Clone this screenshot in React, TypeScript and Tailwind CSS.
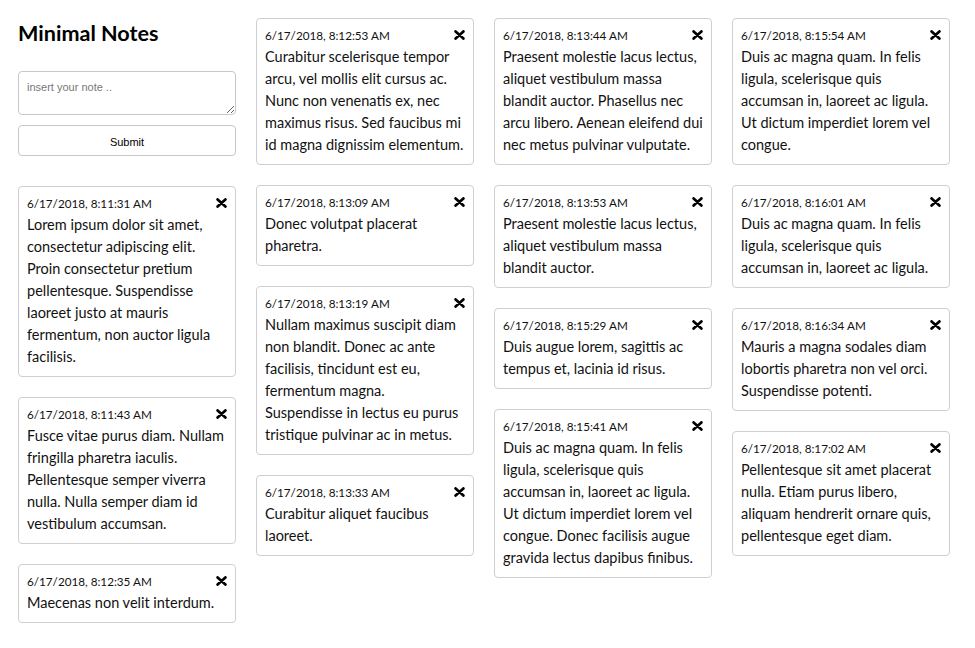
import React from "react";

type Note = { date: string; lines: string[] };

const columns: Note[][] = [
  [
    {
      date: "6/17/2018, 8:11:31 AM",
      lines: [
        "Lorem ipsum dolor sit amet,",
        "consectetur adipiscing elit.",
        "Proin consectetur pretium",
        "pellentesque. Suspendisse",
        "laoreet justo at mauris",
        "fermentum, non auctor ligula",
        "facilisis.",
      ],
    },
    {
      date: "6/17/2018, 8:11:43 AM",
      lines: [
        "Fusce vitae purus diam. Nullam",
        "fringilla pharetra iaculis.",
        "Pellentesque semper viverra",
        "nulla. Nulla semper diam id",
        "vestibulum accumsan.",
      ],
    },
    {
      date: "6/17/2018, 8:12:35 AM",
      lines: ["Maecenas non velit interdum."],
    },
  ],
  [
    {
      date: "6/17/2018, 8:12:53 AM",
      lines: [
        "Curabitur scelerisque tempor",
        "arcu, vel mollis elit cursus ac.",
        "Nunc non venenatis ex, nec",
        "maximus risus. Sed faucibus mi",
        "id magna dignissim elementum.",
      ],
    },
    {
      date: "6/17/2018, 8:13:09 AM",
      lines: ["Donec volutpat placerat", "pharetra."],
    },
    {
      date: "6/17/2018, 8:13:19 AM",
      lines: [
        "Nullam maximus suscipit diam",
        "non blandit. Donec ac ante",
        "facilisis, tincidunt est eu,",
        "fermentum magna.",
        "Suspendisse in lectus eu purus",
        "tristique pulvinar ac in metus.",
      ],
    },
    {
      date: "6/17/2018, 8:13:33 AM",
      lines: ["Curabitur aliquet faucibus", "laoreet."],
    },
  ],
  [
    {
      date: "6/17/2018, 8:13:44 AM",
      lines: [
        "Praesent molestie lacus lectus,",
        "aliquet vestibulum massa",
        "blandit auctor. Phasellus nec",
        "arcu libero. Aenean eleifend dui",
        "nec metus pulvinar vulputate.",
      ],
    },
    {
      date: "6/17/2018, 8:13:53 AM",
      lines: [
        "Praesent molestie lacus lectus,",
        "aliquet vestibulum massa",
        "blandit auctor.",
      ],
    },
    {
      date: "6/17/2018, 8:15:29 AM",
      lines: ["Duis augue lorem, sagittis ac", "tempus et, lacinia id risus."],
    },
    {
      date: "6/17/2018, 8:15:41 AM",
      lines: [
        "Duis ac magna quam. In felis",
        "ligula, scelerisque quis",
        "accumsan in, laoreet ac ligula.",
        "Ut dictum imperdiet lorem vel",
        "congue. Donec facilisis augue",
        "gravida lectus dapibus finibus.",
      ],
    },
  ],
  [
    {
      date: "6/17/2018, 8:15:54 AM",
      lines: [
        "Duis ac magna quam. In felis",
        "ligula, scelerisque quis",
        "accumsan in, laoreet ac ligula.",
        "Ut dictum imperdiet lorem vel",
        "congue.",
      ],
    },
    {
      date: "6/17/2018, 8:16:01 AM",
      lines: [
        "Duis ac magna quam. In felis",
        "ligula, scelerisque quis",
        "accumsan in, laoreet ac ligula.",
      ],
    },
    {
      date: "6/17/2018, 8:16:34 AM",
      lines: [
        "Mauris a magna sodales diam",
        "lobortis pharetra non vel orci.",
        "Suspendisse potenti.",
      ],
    },
    {
      date: "6/17/2018, 8:17:02 AM",
      lines: [
        "Pellentesque sit amet placerat",
        "nulla. Etiam purus libero,",
        "aliquam hendrerit ornare quis,",
        "pellentesque eget diam.",
      ],
    },
  ],
];

function CloseIcon() {
  return (
    <svg width="11" height="10" viewBox="0 0 11 10" className="mt-[4px] shrink-0">
      <path
        d="M1.6 1.4 L9.4 8.6 M9.4 1.4 L1.6 8.6"
        stroke="#000"
        strokeWidth="2.7"
        strokeLinecap="round"
        fill="none"
      />
    </svg>
  );
}

function NoteCard({ note }: { note: Note }) {
  return (
    <div className="border border-[#cfcfcf] rounded-[4px] px-2 pt-[7px] pb-2 bg-white">
      <div className="flex items-start justify-between h-[20px] text-[11.7px] leading-[18px] text-[#111]">
        <span>{note.date}</span>
        <CloseIcon />
      </div>
      <div className="text-[14.5px] leading-[22px] text-[#111]">
        {note.lines.map((l, i) => (
          <div key={i} className="whitespace-nowrap">
            {l}
          </div>
        ))}
      </div>
    </div>
  );
}

export default function App() {
  return (
    <div
      className="min-h-[648px] bg-white pt-[18px] pl-[18px] flex gap-5 items-start"
      style={{ fontFamily: "Lato, 'Noto Sans', sans-serif" }}
    >
      <div className="w-[218px] flex flex-col">
        <h1 className="text-[21.6px] leading-[30px] font-bold text-black">
          Minimal Notes
        </h1>
        <textarea
          placeholder="insert your note .."
          className="mt-[23px] h-[44px] w-full border border-[#c8c8c8] rounded-[4px] px-2 pt-[8px] text-[11px] leading-[14px] placeholder:text-[#777] outline-none resize-y"
          style={{ fontFamily: "'Liberation Sans', Arial, sans-serif" }}
        />
        <button
          className="mt-[10px] h-[31px] w-full border border-[#c8c8c8] rounded-[4px] bg-white text-[11px] leading-[14px] pt-[2px] text-black"
          style={{ fontFamily: "'Liberation Sans', Arial, sans-serif" }}
        >
          Submit
        </button>
        <div className="mt-[30px] flex flex-col gap-5">
          {columns[0].map((n, i) => (
            <NoteCard key={i} note={n} />
          ))}
        </div>
      </div>
      {columns.slice(1).map((col, ci) => (
        <div key={ci} className="w-[218px] flex flex-col gap-5">
          {col.map((n, i) => (
            <NoteCard key={i} note={n} />
          ))}
        </div>
      ))}
    </div>
  );
}
